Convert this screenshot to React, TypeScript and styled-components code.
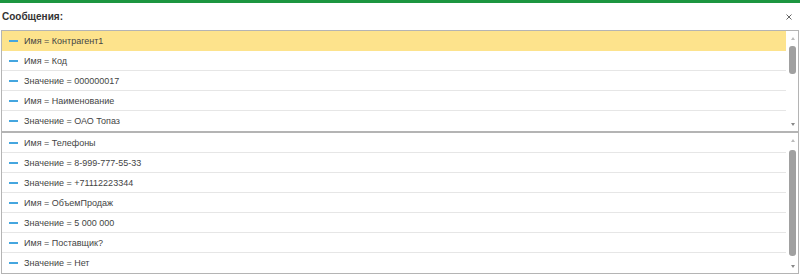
import React from "react";
import styled, { createGlobalStyle } from "styled-components";

const Global = createGlobalStyle`
  html, body { margin: 0; padding: 0; background: #fff; }
  body { font-family: Arial, "Liberation Sans", sans-serif; }
`;

const Window = styled.div`
  width: 800px;
  height: 275px;
  box-sizing: border-box;
  border-top: 3px solid #1c9640;
  display: flex;
  flex-direction: column;
  background: #fff;
`;

const Header = styled.div`
  height: 27px;
  display: flex;
  align-items: center;
  justify-content: space-between;
  padding: 0 7px 0 2px;
`;

const Title = styled.div`
  font-family: Arial, "Liberation Sans", sans-serif;
  font-weight: bold;
  font-size: 10px;
  color: #333;
`;

const Close = styled.button`
  border: none;
  background: none;
  padding: 0;
  width: 8px;
  height: 8px;
  display: flex;
  align-items: center;
  justify-content: center;
`;

const Panel = styled.div`
  margin: 0 1px 0 1px;
  border: 1px solid #b4b4b4;
  display: flex;
`;

const Rows = styled.div`
  flex: 1;
  display: flex;
  flex-direction: column;
  padding-right: 1px;
`;

const Row = styled.div<{ $active?: boolean }>`
  height: 19px;
  border-bottom: 1px solid ${(p) => (p.$active ? "#fde38c" : "#e6e6e6")};
  background: ${(p) => (p.$active ? "#fde38c" : "#fff")};
  display: flex;
  align-items: center;
  font-family: Arial, "Liberation Sans", sans-serif;
  font-size: 9px;
  color: #444;
  &:last-child { border-bottom: none; height: 20px; }
`;

const Dash = styled.span`
  width: 9px;
  height: 2px;
  background: #45a6df;
  margin: 0 6px 0 7px;
  flex: none;
`;

const Scroll = styled.div`
  width: 11px;
  display: flex;
  flex-direction: column;
  align-items: center;
  padding: 4px 0 3px;
  box-sizing: border-box;
`;

const Arrow = styled.div<{ $down?: boolean }>`
  width: 0;
  height: 0;
  border-left: 2.5px solid transparent;
  border-right: 2.5px solid transparent;
  ${(p) =>
    p.$down
      ? "border-top: 3px solid #888;"
      : "border-bottom: 3px solid #bbb;"}
  margin: 2px 0;
`;

const Track = styled.div`
  flex: 1;
  width: 7px;
  display: flex;
  flex-direction: column;
  padding: 4px 0;
`;

const Thumb = styled.div`
  width: 7px;
  border-radius: 3px;
  background: #a0a0a0;
`;

type PanelData = { items: string[]; active?: number; thumbTop: number; thumbH: number };

const panels: PanelData[] = [
  {
    items: ["Имя = Контрагент1", "Имя = Код", "Значение = 000000017", "Имя = Наименование", "Значение = ОАО Топаз"],
    active: 0,
    thumbTop: 0,
    thumbH: 28,
  },
  {
    items: [
      "Имя = Телефоны",
      "Значение = 8-999-777-55-33",
      "Значение = +71112223344",
      "Имя = ОбъемПродаж",
      "Значение = 5 000 000",
      "Имя = Поставщик?",
      "Значение = Нет",
    ],
    thumbTop: 2,
    thumbH: 106,
  },
];

function MessagePanel({ data }: { data: PanelData }) {
  return (
    <Panel>
      <Rows>
        {data.items.map((t, i) => (
          <Row key={i} $active={data.active === i}>
            <Dash />
            {t}
          </Row>
        ))}
      </Rows>
      <Scroll>
        <Arrow />
        <Track>
          <Thumb style={{ marginTop: data.thumbTop, height: data.thumbH }} />
        </Track>
        <Arrow $down />
      </Scroll>
    </Panel>
  );
}

export default function App() {
  return (
    <>
      <Global />
      <Window>
        <Header>
          <Title>Сообщения:</Title>
          <Close aria-label="close">
            <svg width="6" height="6" viewBox="0 0 6 6">
              <path d="M0.5 0.5 L5.5 5.5 M5.5 0.5 L0.5 5.5" stroke="#666" strokeWidth="1" />
            </svg>
          </Close>
        </Header>
        {panels.map((p, i) => (
          <MessagePanel key={i} data={p} />
        ))}
      </Window>
    </>
  );
}
